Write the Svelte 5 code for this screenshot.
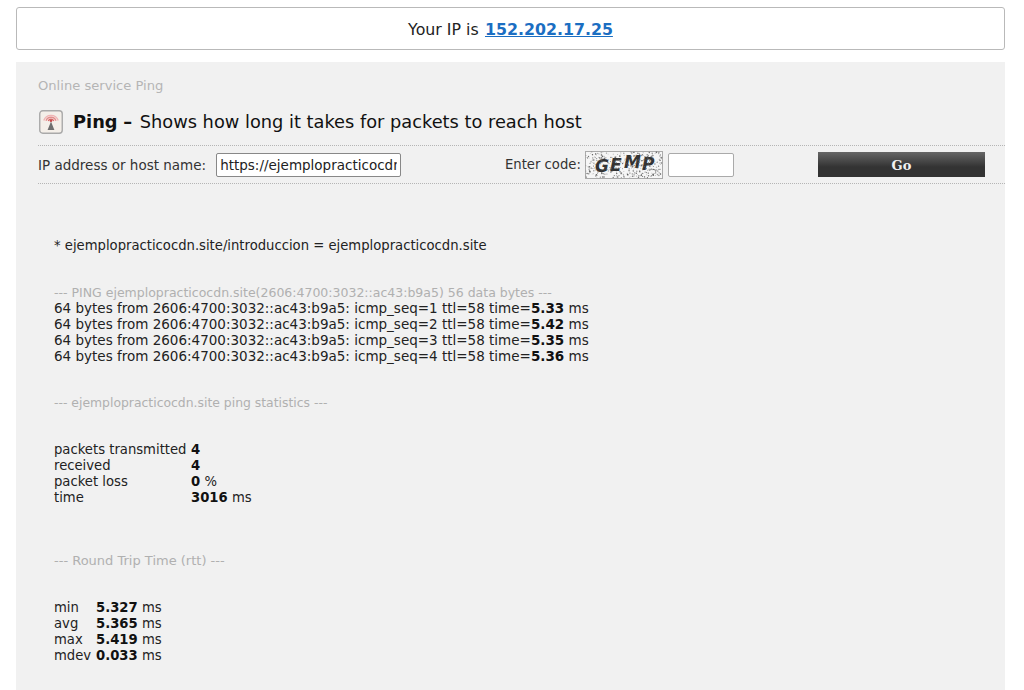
<script>
  const pings = [
    [1, '5.33'],
    [2, '5.42'],
    [3, '5.35'],
    [4, '5.36']
  ];
  const stats = [
    ['packets transmitted', '4', ''],
    ['received', '4', ''],
    ['packet loss', '0', ' %'],
    ['time', '3016', ' ms']
  ];
  const rtt = [
    ['min', '5.327'],
    ['avg', '5.365'],
    ['max', '5.419'],
    ['mdev', '0.033']
  ];
  let seed = 7;
  const rnd = () => {
    seed = (seed * 16807) % 2147483647;
    return seed / 2147483647;
  };
  const noise = Array.from({ length: 420 }, () => ({
    x: (rnd() * 76).toFixed(1),
    y: (rnd() * 26).toFixed(1),
    r: (0.3 + rnd() * 0.5).toFixed(2),
    o: (0.35 + rnd() * 0.6).toFixed(2)
  }));
</script>

<div class="page">
  <div class="ipbox">Your IP is <a href="#ip">152.202.17.25</a></div>

  <main class="panel">
    <div class="crumb">Online service Ping</div>
    <h1 class="title">
      <svg class="icon" viewBox="0 0 24 24" aria-hidden="true">
        <rect x="0.75" y="0.75" width="22.5" height="22.5" rx="3" fill="#f4efe9" stroke="#a9a9a9" stroke-width="1.4" />
        <path d="M4.8 10.5a7.6 7.6 0 0 1 14.4 0" fill="none" stroke="#f0b4b4" stroke-width="1.4" />
        <path d="M7 10.8a5.3 5.3 0 0 1 10 0" fill="none" stroke="#e58c8c" stroke-width="1.3" />
        <path d="M9.2 11a3 3 0 0 1 5.6 0" fill="none" stroke="#d96a6a" stroke-width="1.2" />
        <circle cx="12" cy="10.8" r="1.3" fill="#c94a4a" />
        <path d="M12 11.5 8.6 20h6.8z" fill="#6f6f6f" />
      </svg>
      <span><b>Ping</b> <b class="dash">–</b> Shows how long it takes for packets to reach host</span>
    </h1>

    <form class="form">
      <label class="host">
        IP address or host name:
        <input type="text" value="https://ejemplopracticocdn.site/introduccion" />
      </label>
      <div class="code">
        <span>Enter code:</span>
        <svg class="captcha" viewBox="0 0 78 28" aria-hidden="true">
          <rect x="0.5" y="0.5" width="77" height="27" fill="#f6f6f6" stroke="#aaa" />
          <text class="captcha-text" x="10 25 39 57" y="21 20 17 19">GEMP</text>
          {#each noise as d}
            <circle cx={+d.x + 1} cy={+d.y + 1} r={d.r} fill="#555" opacity={d.o} />
          {/each}
        </svg>
        <input class="code-input" type="text" />
      </div>
      <button type="button" class="go">Go</button>
    </form>

    <section class="output">
      <p class="cmd">* ejemplopracticocdn.site/introduccion = ejemplopracticocdn.site</p>

      <div class="ping">
        <div class="muted ping-head">--- PING ejemplopracticocdn.site(2606:4700:3032::ac43:b9a5) 56 data bytes ---</div>
        {#each pings as [seq, time]}
          <div class="ping-row">64 bytes from 2606:4700:3032::ac43:b9a5: icmp_seq={seq} ttl=58 time=<b>{time}</b> ms</div>
        {/each}
      </div>

      <div class="muted heading stats-head">--- ejemplopracticocdn.site ping statistics ---</div>

      <div class="stats">
        {#each stats as [k, v, u]}
          <span>{k}</span><span><b>{v}</b>{u}</span>
        {/each}
      </div>

      <div class="muted heading rtt-heading">--- Round Trip Time (rtt) ---</div>

      <div class="rtt">
        {#each rtt as [k, v]}
          <span>{k}</span><span><b>{v}</b> ms</span>
        {/each}
      </div>
    </section>
  </main>
</div>

<style>
  :global(body) {
    margin: 0;
    background: #fff;
    font-family: "DejaVu Sans", Verdana, sans-serif;
    color: #222;
  }
  .page {
    height: 690px;
    overflow: hidden;
    padding: 7px 19px 0 16px;
    box-sizing: border-box;
  }
  .ipbox {
    height: 43px;
    box-sizing: border-box;
    border: 1px solid #b9b9b9;
    border-radius: 3px;
    display: flex;
    align-items: center;
    justify-content: center;
    gap: 0.4em;
    font-size: 15.8px;
    padding-top: 1px;
    color: #222;
  }
  .ipbox a {
    color: #1b6ec2;
    font-weight: bold;
  }
  .panel {
    margin-top: 12px;
    background: #f1f1f1;
    padding: 16px 0 0 22px;
    height: 640px;
    box-sizing: border-box;
  }
  .crumb {
    font-size: 13.1px;
    line-height: 16px;
    color: #b5b5b5;
  }
  .title {
    margin: 15px 0 0;
    height: 36px;
    display: flex;
    align-items: flex-start;
    gap: 10px;
    font-size: 17.8px;
    line-height: 26px;
    font-weight: normal;
    color: #111;
  }
  .title .dash {
    font-weight: bold;
    margin-right: 2px;
  }
  .icon {
    width: 24px;
    height: 24px;
    margin-top: 1px;
    margin-left: 1px;
    flex: none;
  }
  .form {
    height: 39px;
    box-sizing: border-box;
    border-top: 1px dotted #b5b5b5;
    border-bottom: 1px dotted #b5b5b5;
    display: flex;
    align-items: center;
    font-size: 13.5px;
    color: #333;
  }
  .host {
    display: flex;
    align-items: center;
    gap: 10px;
    width: 467px;
  }
  input {
    box-sizing: border-box;
    height: 24px;
    background: #fff;
    border: 1px solid #888;
    border-radius: 2px;
    font: inherit;
    color: #222;
    padding: 0 3px;
  }
  .host input {
    width: 185px;
  }
  .code {
    display: flex;
    align-items: center;
    width: 313px;
    font-size: 13.2px;
  }
  .captcha {
    width: 78px;
    height: 28px;
    margin-left: 4px;
  }
  .captcha-text {
    font-family: "DejaVu Sans", sans-serif;
    font-weight: bold;
    font-style: italic;
    font-size: 17px;
    fill: #333;
  }
  .code-input {
    width: 66px;
    margin-left: 5px;
    border-color: #aaa;
  }
  .go {
    width: 167px;
    height: 25px;
    border: 0;
    padding: 1px 0 0;
    background: linear-gradient(#666, #333 60%);
    color: #f2f2f2;
    font-family: "DejaVu Serif", serif;
    font-weight: bold;
    font-size: 13px;
  }
  .output {
    padding: 54px 0 0 16px;
    font-size: 13.2px;
    line-height: 15.9px;
    color: #222;
  }
  .output b {
    color: #111;
  }
  .cmd {
    margin: 0;
  }
  .ping {
    margin-top: 31px;
  }
  .ping-row {
    font-size: 13.5px;
  }
  .muted {
    color: #b0b0b0;
  }
  .ping-head {
    font-size: 12.5px;
  }
  .stats-head {
    font-size: 12.4px;
  }
  .heading {
    margin-top: 31px;
  }
  .stats {
    margin-top: 31px;
    display: grid;
    grid-template-columns: 137px auto;
    justify-content: start;
  }
  .rtt-heading {
    margin-top: 47px;
    font-size: 13px;
  }
  .rtt {
    margin-top: 31px;
    display: grid;
    grid-template-columns: 42px auto;
    justify-content: start;
  }
</style>
